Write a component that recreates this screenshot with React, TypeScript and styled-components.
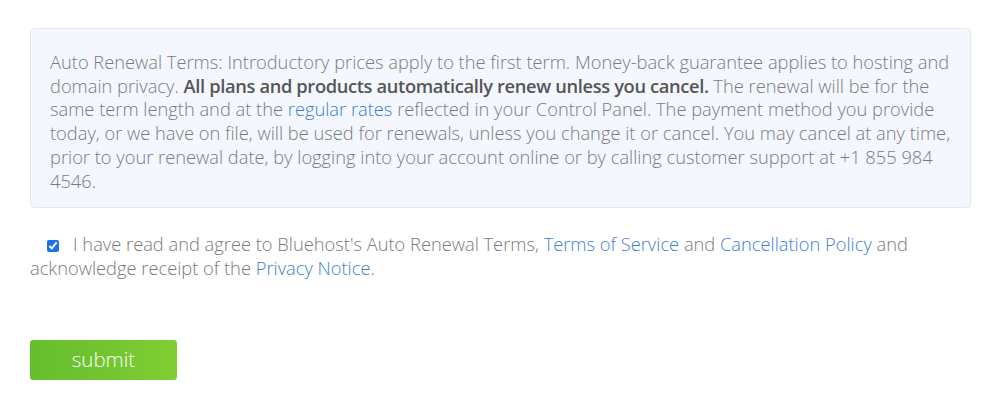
import React from "react";
import styled, { createGlobalStyle } from "styled-components";

const Global = createGlobalStyle`
  html, body { margin: 0; padding: 0; background: #fff; }
  body { font-family: "Open Sans", "Noto Sans", sans-serif; }
`;

const Page = styled.div`
  padding: 28px 29px 0 30px;
  display: flex;
  flex-direction: column;
`;

const Notice = styled.div`
  background: #f4f8fe;
  border: 1px solid #e3e9f1;
  border-radius: 4px;
  padding: 21px 16px 15px 19px;
  color: #7b7b7b;
  font-size: 18.3px;
  font-weight: 300;
  line-height: 23.7px;
`;

const Strong = styled.strong`
  font-weight: 600;
  color: #555;
  letter-spacing: -0.35px;
`;

const Link = styled.a`
  color: #3f7fcf;
  text-decoration: none;
`;

const Agree = styled.label`
  margin-top: 24px;
  color: #7b7b7b;
  font-size: 18.3px;
  font-weight: 300;
  line-height: 24px;
  display: block;
`;

const Check = styled.input`
  margin: 0 14px 0 17px;
  width: 12px;
  height: 12px;
  vertical-align: -1px;
  accent-color: #1a73e8;
`;

const Submit = styled.button`
  margin-top: 60px;
  width: 147px;
  height: 40px;
  border: none;
  border-radius: 3px;
  background: linear-gradient(90deg, #66bd2d 0%, #72c530 50%, #80cd33 100%);
  color: #fff;
  font-family: "Open Sans", sans-serif;
  font-size: 20.5px;
  font-weight: 300;
  padding: 0 0 2px;
  cursor: pointer;
`;

export default function App() {
  return (
    <>
      <Global />
      <Page>
        <Notice>
          Auto Renewal Terms: Introductory prices apply to the first term. Money-back guarantee applies to hosting and
          domain privacy. <Strong>All plans and products automatically renew unless you cancel.</Strong> The renewal will be for the
          same term length and at the <Link href="#">regular rates</Link> reflected in your Control Panel. The payment method you provide
          today, or we have on file, will be used for renewals, unless you change it or cancel. You may cancel at any time,
          prior to your renewal date, by logging into your account online or by calling customer support at +1 855 984 4546.
        </Notice>
        <Agree>
          <Check type="checkbox" defaultChecked />
          I have read and agree to Bluehost's Auto Renewal Terms, <Link href="#">Terms of Service</Link> and{" "}
          <Link href="#">Cancellation Policy</Link> and acknowledge receipt of the <Link href="#">Privacy Notice</Link>.
        </Agree>
        <div>
          <Submit type="button">submit</Submit>
        </div>
      </Page>
    </>
  );
}
